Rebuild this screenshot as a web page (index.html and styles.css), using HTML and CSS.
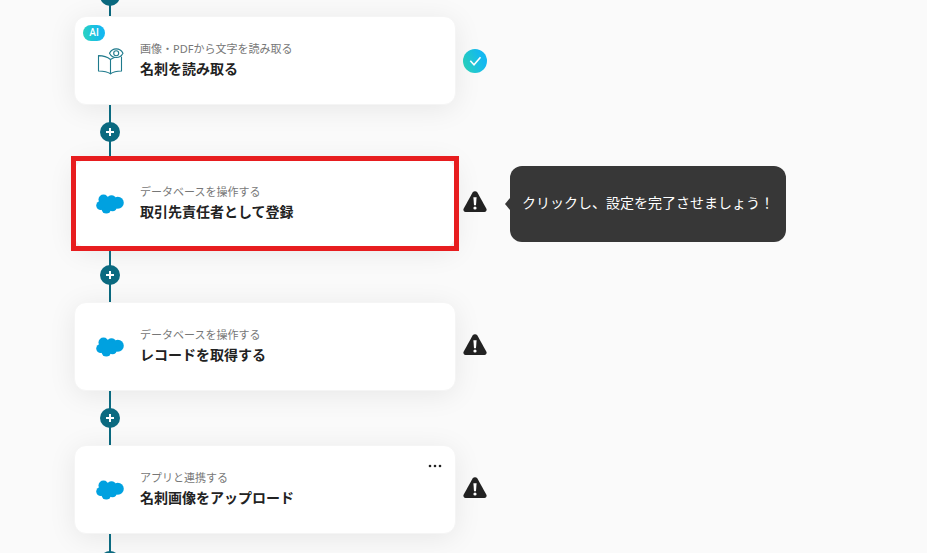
FILE: index.html
```html
<!DOCTYPE html>
<html lang="ja">
<head>
    <meta charset="UTF-8">
    <meta name="viewport" content="width=device-width, initial-scale=1.0">
    <title>フロー</title>
    <link rel="stylesheet" href="styles.css">
</head>
<body>
    <!-- shared icons -->
    <svg class="icons" aria-hidden="true">
        <symbol id="plus" viewBox="0 0 20 20">
            <path d="M10 6v8M6 10h8" stroke="#fff" stroke-width="2" fill="none"/>
        </symbol>
        <symbol id="cloud" viewBox="0 0 28 20">
            <g fill="#00a1e0">
                <circle cx="7.500" cy="5.500" r="5"/>
                <circle cx="15.500" cy="5.800" r="4.600"/>
                <circle cx="21.800" cy="8.800" r="6"/>
                <circle cx="4.800" cy="11.500" r="4.600"/>
                <circle cx="10.300" cy="14.800" r="4.800"/>
                <circle cx="16.500" cy="12.800" r="4.500"/>
                <circle cx="11.500" cy="9" r="5.500"/>
            </g>
        </symbol>
        <symbol id="warning" viewBox="0 0 24 24">
            <path fill="#222" d="M9.6 2.6a2.8 2.8 0 0 1 4.8 0l9 16.2a2.3 2.3 0 0 1-2 3.2H2.6a2.3 2.3 0 0 1-2-3.2z"/>
            <path d="M10.4 7.2h3.200l-.6 8h-2z" fill="#fff"/>
            <circle cx="12" cy="18" r="1.6" fill="#fff"/>
        </symbol>
    </svg>

    <main class="flow">
        <div class="connector connector-start">
            <button class="add" type="button" aria-label="追加"><svg><use href="#plus"/></svg></button>
        </div>

        <div class="step">
            <section class="card">
                <span class="badge">AI</span>
                <svg class="icon book" viewBox="0 0 28 28" fill="none" stroke="#1f7a8c" stroke-width="1.1" stroke-linejoin="round" stroke-linecap="round">
                    <path d="M14.500 12.500C11 9.600 7 8.600 2.500 8.600V24c4.500 0 8.500.3 12 2.800 3.200-2.500 7-2.800 11-2.800V10"/>
                    <path d="M14.500 26.800V12.500c1.500-1 2.600-1.600 4-2"/>
                    <path d="M13.500 6.200c3-5.800 10.500-5.800 13.500 0-3 5.800-10.500 5.800-13.500 0z"/>
                    <circle cx="20.200" cy="6.200" r="2.500"/>
                </svg>
                <div class="text">
                    <p class="kind">画像・PDFから文字を読み取る</p>
                    <h2 class="name">名刺を読み取る</h2>
                </div>
            </section>
            <svg class="status" viewBox="0 0 24 24" role="img" aria-label="設定済み">
                <defs>
                    <linearGradient id="done" x1="0" y1="0.7" x2="1" y2="0.3">
                        <stop offset="0" stop-color="#2bd4bd"/>
                        <stop offset="0.8" stop-color="#14b8f0"/>
                    </linearGradient>
                </defs>
                <circle cx="12" cy="12" r="12" fill="url(#done)"/>
                <path d="M7.300 11.800l3.700 3.900 6.500-7.400" fill="none" stroke="#fff" stroke-width="1.600"/>
            </svg>
        </div>

        <div class="connector">
            <button class="add" type="button" aria-label="追加"><svg><use href="#plus"/></svg></button>
        </div>

        <div class="step">
            <section class="card card-selected">
                <svg class="icon"><use href="#cloud"/></svg>
                <div class="text">
                    <p class="kind">データベースを操作する</p>
                    <h2 class="name">取引先責任者として登録</h2>
                </div>
            </section>
            <div class="hint">
                <svg class="status status-warning" role="img" aria-label="未設定"><use href="#warning"/></svg>
                <div class="tooltip" role="tooltip">クリックし、設定を完了させましょう！</div>
            </div>
        </div>

        <div class="connector">
            <button class="add" type="button" aria-label="追加"><svg><use href="#plus"/></svg></button>
        </div>

        <div class="step">
            <section class="card">
                <svg class="icon"><use href="#cloud"/></svg>
                <div class="text">
                    <p class="kind">データベースを操作する</p>
                    <h2 class="name">レコードを取得する</h2>
                </div>
            </section>
            <svg class="status status-warning" role="img" aria-label="未設定"><use href="#warning"/></svg>
        </div>

        <div class="connector">
            <button class="add" type="button" aria-label="追加"><svg><use href="#plus"/></svg></button>
        </div>

        <div class="step">
            <section class="card">
                <svg class="icon"><use href="#cloud"/></svg>
                <div class="text">
                    <p class="kind">アプリと連携する</p>
                    <h2 class="name">名刺画像をアップロード</h2>
                </div>
                <button class="more" type="button" aria-label="メニュー">
                    <svg viewBox="0 0 14 4" fill="#222">
                        <circle cx="2" cy="2" r="1.300"/>
                        <circle cx="7" cy="2" r="1.300"/>
                        <circle cx="12" cy="2" r="1.300"/>
                    </svg>
                </button>
            </section>
            <svg class="status status-warning" role="img" aria-label="未設定"><use href="#warning"/></svg>
        </div>

        <div class="connector">
            <button class="add" type="button" aria-label="追加"><svg><use href="#plus"/></svg></button>
        </div>
    </main>
</body>
</html>
```

FILE: styles.css
```css
* {
    box-sizing: border-box;
}

body {
    margin: 0;
    height: 100vh;
    overflow: hidden;
    background: #fafafa;
    color: #222;
    font-family: "Noto Sans", "Noto Sans CJK JP", sans-serif;
}

.icons {
    position: absolute;
    width: 0;
    height: 0;
}

/* the flow starts above the top edge, as if scrolled */
.flow {
    margin-top: -14px;
    padding-left: 74px;
}

.step {
    display: flex;
    align-items: center;
    gap: 7px;
}

.card {
    position: relative;
    display: flex;
    align-items: center;
    gap: 16px;
    width: 100%;
    max-width: 382px;
    min-height: 89px;
    padding: 20px 21px;
    background: #fff;
    border: 1px solid #f5f5f5;
    border-radius: 12px;
    box-shadow: 0 4px 28px rgba(0, 0, 0, 0.08);
}

.card-selected::after {
    content: "";
    position: absolute;
    z-index: 1;
    inset: -4px;
    border: 5px solid #e71d1f;
}

.icon {
    flex: none;
    width: 28px;
    height: 20px;
}

.book {
    height: 28px;
}

.text {
    padding-bottom: 4px;
}

.kind,
.name {
    margin: 0;
    line-height: 20px;
}

.kind {
    font-size: 11px;
    color: #777;
}

.name {
    font-size: 14px;
    font-weight: bold;
}

.badge {
    position: absolute;
    top: 8px;
    left: 8px;
    width: 22px;
    border-radius: 8px;
    background: linear-gradient(80deg, #2bd4bd, #14b8f0 80%);
    color: #fff;
    font-family: Roboto, sans-serif;
    font-size: 10px;
    font-weight: 500;
    line-height: 16px;
    text-align: center;
}

.more {
    position: absolute;
    top: 12px;
    right: 13px;
    display: flex;
    align-items: center;
    height: 16px;
    padding: 0;
    border: none;
    background: none;
    cursor: pointer;
}

.more svg {
    width: 14px;
    height: 4px;
}

.status {
    display: block;
    flex: none;
    width: 24px;
    height: 24px;
}

.status-warning {
    margin-bottom: 4px;
}

.hint {
    position: relative;
}

.tooltip {
    position: absolute;
    top: 50%;
    left: 47px;
    transform: translateY(-50%);
    padding: 25px 12px 27px;
    border-radius: 12px;
    background: #373737;
    color: #fff;
    font-size: 14px;
    line-height: 24px;
    white-space: nowrap;
}

.tooltip::before {
    content: "";
    position: absolute;
    top: 50%;
    left: -5px;
    margin-top: -6px;
    border: 6px solid transparent;
    border-left: none;
    border-right: 5px solid #373737;
}

.connector {
    position: relative;
    display: flex;
    align-items: center;
    width: 20px;
    height: 54px;
    margin-left: 26px;
    background: linear-gradient(#0b6a80, #0b6a80) center / 2px 100% no-repeat;
}

.connector-start {
    align-items: flex-start;
    height: 30px;
}

.add {
    width: 20px;
    height: 20px;
    padding: 0;
    border: none;
    border-radius: 50%;
    background: #0b6a80;
    cursor: pointer;
}

.add svg {
    display: block;
    width: 20px;
    height: 20px;
}
```
